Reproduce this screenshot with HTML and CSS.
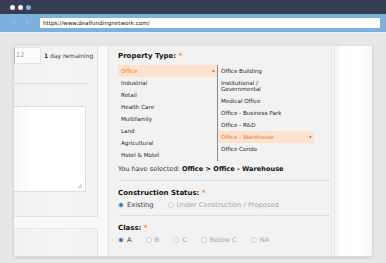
FILE: index.html
```html
<!DOCTYPE html>
<html lang="en">
<head>
  <meta charset="UTF-8" />
  <title>Deal Funding Network – New Listing</title>
  <link rel="stylesheet" href="styles.css">
</head>
<body>

  <div class="window">
    <div class="titlebar">
      <span class="dot"></span>
      <span class="dot"></span>
      <span class="dot dot-blue"></span>
    </div>
    <div class="addressbar">
      <span class="nav">&#8249;</span>
      <span class="nav">&#8250;</span>
      <div class="url">https://www.dealfundingnetwork.com/</div>
    </div>

    <div class="viewport">
      <div class="frame">

        <!-- left side: deadline + notes -->
        <div class="side">
          <div class="side-panel">
            <div class="deadline">
              <div class="date-box">12</div>
              <div class="remaining"><b>1</b> day remaining</div>
            </div>
            <div class="dots"></div>
            <div class="notes"><span class="grip"></span></div>
          </div>
          <div class="side-panel side-bottom"></div>
        </div>

        <!-- listing form -->
        <div class="form">
          <h3>Property Type: <span class="req">*</span></h3>
          <div class="picker">
            <ul class="list">
              <li class="active">Office <span class="caret">&#9666;</span></li>
              <li>Industrial</li>
              <li>Retail</li>
              <li>Health Care</li>
              <li>Multifamily</li>
              <li>Land</li>
              <li>Agricultural</li>
              <li>Hotel &amp; Motel</li>
            </ul>
            <ul class="list sub">
              <li>Office Building</li>
              <li class="two">Institutional /<br>Governmental</li>
              <li>Medical Office</li>
              <li>Office - Business Park</li>
              <li>Office - R&amp;D</li>
              <li class="active">Office - Warehouse <span class="caret">&#9666;</span></li>
              <li>Office Condo</li>
            </ul>
          </div>
          <p class="selected">You have selected: <b>Office &gt; Office - Warehouse</b></p>

          <div class="field">
            <h3>Construction Status: <span class="req">*</span></h3>
            <div class="radios">
              <label class="on"><span class="radio"></span>Existing</label>
              <label><span class="radio"></span>Under Construction / Proposed</label>
            </div>
          </div>

          <div class="field">
            <h3>Class: <span class="req">*</span></h3>
            <div class="radios">
              <label class="on"><span class="radio"></span>A</label>
              <label><span class="radio"></span>B</label>
              <label><span class="radio"></span>C</label>
              <label><span class="radio"></span>Below C</label>
              <label><span class="radio"></span>NA</label>
            </div>
          </div>
        </div>

        <div class="aside"></div>
      </div>
    </div>
  </div>

</body>
</html>
```

FILE: styles.css
```css
* {
  margin: 0;
  padding: 0;
  box-sizing: border-box;
}

body {
  width: 386px;
  height: 263px;
  overflow: hidden;
  font-family: 'DejaVu Sans', Verdana, sans-serif;
  color: #222;
  background: #e7e7e7;
}

/* browser chrome */
.titlebar {
  height: 14px;
  background: #373e53;
  display: flex;
  align-items: center;
  gap: 3px;
  padding-left: 10px;
}

.dot {
  width: 5px;
  height: 5px;
  border-radius: 50%;
  background: #f4f5f8;
}

.dot-blue {
  background: #79b3e3;
}

.addressbar {
  height: 18px;
  background: #7bb1dc;
  display: flex;
  align-items: center;
  padding: 0 6px 0 12px;
}

.nav {
  color: #a6cbea;
  font-size: 10px;
  width: 13px;
  line-height: 1;
}

.url {
  flex: 1;
  height: 10px;
  margin-left: 2px;
  background: #fff;
  font-size: 5.6px;
  line-height: 10px;
  padding-left: 3px;
  color: #111;
}

/* page */
.viewport {
  padding: 12px 13px 7px 13px;
  border-top: 1px solid #eef0f2;
}

.frame {
  height: 212px;
  display: flex;
  background: #f8f8f8;
  border: 1px solid #dcdcdc;
  border-top-color: #e4e4e4;
  border-radius: 2px 2px 4px 4px;
  box-shadow: 0 1px 3px rgba(0, 0, 0, 0.12);
  overflow: hidden;
}

.side {
  width: 84px;
  display: flex;
  flex-direction: column;
  gap: 11px;
}

.side-panel {
  background: linear-gradient(90deg, #f1f1f1, #f4f4f4 40%, #f2f2f2);
  border-right: 1px solid #e2e2e2;
  border-bottom: 1px solid #e2e2e2;
  height: 171px;
  padding-top: 1px;
}

.side-bottom {
  flex: 1;
  border-top: 1px solid #e6e6e6;
  border-bottom: none;
  border-top-right-radius: 3px;
}

.deadline {
  display: flex;
  align-items: center;
  gap: 3px;
}

.date-box {
  width: 27px;
  height: 17px;
  background: #fbfbfb;
  border: 1px solid #e3e3e3;
  border-left: 1px solid #b5b5b5;
  font-size: 6.5px;
  line-height: 15px;
  padding-left: 1px;
  color: #9a9a9a;
}

.remaining {
  font-size: 6px;
  color: #333;
}

.dots {
  margin: 19px 9px 0 1px;
  border-top: 1px dotted #c9c9c9;
}

.notes {
  position: relative;
  width: 72px;
  height: 86px;
  margin-top: 22px;
  background: linear-gradient(90deg, #f7f7f7, #fff 25%);
  border: 1px solid #dedede;
  border-left: none;
}

/* resize handle in the corner of the textarea */
.grip {
  position: absolute;
  right: 3px;
  bottom: 3px;
  width: 5px;
  height: 5px;
  background:
    radial-gradient(circle, #aaa 0.6px, transparent 0.8px) 0 0 / 2px 2px;
  clip-path: polygon(100% 0, 100% 100%, 0 100%);
}

.form {
  width: 224px;
  margin-left: 10px;
  background: #f2f2f2;
  border-left: 1px solid #e4e4e4;
  border-right: 1px solid #e4e4e4;
  padding: 6px 0 0 9px;
}

h3 {
  font-size: 7px;
  font-weight: bold;
  color: #111;
  line-height: 9px;
}

.req {
  color: #f58a3c;
}

.picker {
  display: flex;
  margin-top: 4px;
}

.list {
  list-style: none;
  width: 99px;
  font-size: 5.6px;
  color: #1e1e1e;
}

.list li {
  height: 12px;
  line-height: 12px;
  padding-left: 3px;
  position: relative;
}

.list li.two {
  height: 18px;
  line-height: 6.5px;
  padding-top: 2.5px;
}

.list li.active {
  background: #fde2cd;
  color: #f27a26;
}

.caret {
  position: absolute;
  right: 3px;
  top: 0;
  color: #555;
  font-size: 4px;
}

.sub {
  width: 97px;
  border-left: 1px solid #8a8a8a;
  height: 96px;
}

.selected {
  font-size: 6.6px;
  line-height: 12px;
  color: #333;
  margin-top: 2px;
}

.selected b {
  color: #111;
}

.field {
  border-top: 1px dotted #cfcfcf;
  margin-top: 5px;
  margin-right: 2px;
  padding-top: 8px;
}

.radios {
  display: flex;
  gap: 14px;
  margin-top: 2px;
  font-size: 6.7px;
  line-height: 10px;
  color: #a8a8a8;
}

.radios label {
  display: flex;
  align-items: center;
  gap: 3px;
}

.radios label.on {
  color: #333;
}

.radio {
  width: 6px;
  height: 6px;
  border-radius: 50%;
  border: 1px solid #d2d2d2;
  background: #f8f8f8;
}

.on .radio {
  border-color: #c8d4de;
  background: radial-gradient(circle, #2a6fb0 1.3px, #8fb2cf 2px);
}

.aside {
  flex: 1;
  margin-left: 1px;
  background: linear-gradient(90deg, #ececec, #fdfdfd 20%, #fff 70%, #f6f6f6);
}
```
